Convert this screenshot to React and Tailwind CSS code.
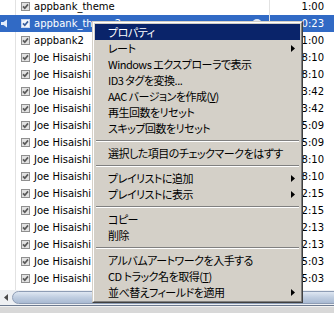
import React from "react";

const rows = [
  { name: "appbank_theme", time: "1:00" },
  { name: "appbank_theme2", time: "0:23", selected: true },
  { name: "appbank2", time: "1:00" },
  { name: "Joe Hisaishi", time: "8:10" },
  { name: "Joe Hisaishi", time: "8:10" },
  { name: "Joe Hisaishi", time: "3:42" },
  { name: "Joe Hisaishi", time: "3:42" },
  { name: "Joe Hisaishi", time: "5:09" },
  { name: "Joe Hisaishi", time: "5:09" },
  { name: "Joe Hisaishi", time: "8:10" },
  { name: "Joe Hisaishi", time: "8:10" },
  { name: "Joe Hisaishi", time: "2:15" },
  { name: "Joe Hisaishi", time: "2:15" },
  { name: "Joe Hisaishi", time: "2:13" },
  { name: "Joe Hisaishi", time: "2:13" },
  { name: "Joe Hisaishi", time: "5:03" },
  { name: "Joe Hisaishi", time: "5:03" },
  { name: "Joe Hisaishi", time: "4:07" },
];

const menu = [
  { label: "プロパティ", active: true },
  { label: "レート", arrow: true },
  { label: "Windows エクスプローラで表示" },
  { label: "ID3 タグを変換..." },
  { label: <>AAC バージョンを作成(<span className="underline">V</span>)</> },
  { label: "再生回数をリセット" },
  { label: "スキップ回数をリセット" },
  { sep: true },
  { label: "選択した項目のチェックマークをはずす" },
  { sep: true },
  { label: "プレイリストに追加", arrow: true },
  { label: "プレイリストに表示", arrow: true },
  { sep: true },
  { label: "コピー" },
  { label: "削除" },
  { sep: true },
  { label: "アルバムアートワークを入手する" },
  { label: <>CD トラック名を取得(<span className="underline">T</span>)</> },
  { label: "並べ替えフィールドを適用", arrow: true },
];

const Check = ({ selected }) => (
  <svg width="9" height="9" viewBox="0 0 9 9" className="shrink-0">
    <rect x="0.5" y="0.5" width="8" height="8" fill={selected ? "#f4f6fb" : "#e2e2e2"} stroke={selected ? "#c9d6ee" : "#8f8f8f"} />
    <path d="M2 4.3 L3.8 6.2 L7 2.4" stroke={selected ? "#3a5f9e" : "#5a5a5a"} strokeWidth="1.7" fill="none" />
  </svg>
);

const Speaker = () => (
  <svg width="8" height="9" viewBox="0 0 8 9">
    <path d="M0 3 H2.5 L6 0.5 V8.5 L2.5 6 H0 Z" fill="#e3ecfb" />
  </svg>
);

const Arrow = () => (
  <svg width="4" height="7" viewBox="0 0 4 7" className="shrink-0">
    <path d="M0 0 L4 3.5 L0 7 Z" fill="#000" />
  </svg>
);

const Row = ({ row }) => (
  <div className={`flex h-[17px] items-center ${row.selected ? "bg-[#316ac5] text-white" : "text-black"}`}>
    <div className={`flex h-full w-[16px] shrink-0 items-center pl-[1px] ${row.selected ? "" : "border-r border-[#e2e2e2]"}`}>
      {row.selected && <Speaker />}
    </div>
    <div className="flex h-full w-[254px] shrink-0 items-center gap-[4px] border-r border-[#e2e2e2] pl-[5px]">
      <Check selected={row.selected} />
      <span className="whitespace-nowrap">{row.name}</span>
      {row.selected && <span className="ml-auto mr-[7px] h-[10px] w-[10px] rounded-full bg-[#dfe8f7]" />}
    </div>
    <div className="flex-1 pr-[10px] text-right">{row.time}</div>
  </div>
);

export default function App() {
  return (
    <div className="relative flex h-[313px] w-[334px] flex-col overflow-hidden bg-white font-['DejaVu_Sans',sans-serif] text-[10px]">
      <div className="h-[290px] overflow-hidden">
        <div className="-mt-[2px]">
          {rows.map((r, i) => (
            <Row key={i} row={r} />
          ))}
        </div>
      </div>

      <div className="flex h-[15px] items-center bg-[#eef0f3]">
        <div className="flex w-[12px] items-center justify-center">
          <svg width="4" height="7" viewBox="0 0 4 7">
            <path d="M4 0 L0 3.5 L4 7 Z" fill="#4a4a4a" />
          </svg>
        </div>
        <div className="h-[13px] flex-1 -mr-[8px] rounded-full border border-[#8e9db5] bg-gradient-to-b from-[#dfe7f2] via-[#bfcde0] to-[#a9bad2]" />
      </div>
      <div className="flex-1 border-t border-[#6c7a90] bg-[#d8d8d8]">
        <div className="h-[1px] bg-[#f2f2f2]" />
      </div>

      <div className="absolute left-[92px] top-[21px] w-[211px] border border-[#d4d0c8] border-b-[#404040] border-r-[#404040] font-['Noto_Sans_CJK_JP',sans-serif] text-[11px] tracking-[-0.5px] [font-feature-settings:'palt']">
        <div className="border border-white border-b-[#808080] border-r-[#808080] bg-[#d4d0c8] p-[1px]">
          {menu.map((m, i) =>
            m.sep ? (
              <div key={i} className="flex h-[9px] flex-col justify-center px-[1px]">
                <div className="h-[1px] bg-[#808080]" />
                <div className="h-[1px] bg-white" />
              </div>
            ) : (
              <div
                key={i}
                className={`flex h-[16px] items-center justify-between pl-[13px] pr-[5px] leading-none ${m.active ? "bg-[#0a246a] text-white" : "text-black"}`}
              >
                <span className="whitespace-nowrap">{m.label}</span>
                {m.arrow && <Arrow />}
              </div>
            )
          )}
        </div>
      </div>
    </div>
  );
}
